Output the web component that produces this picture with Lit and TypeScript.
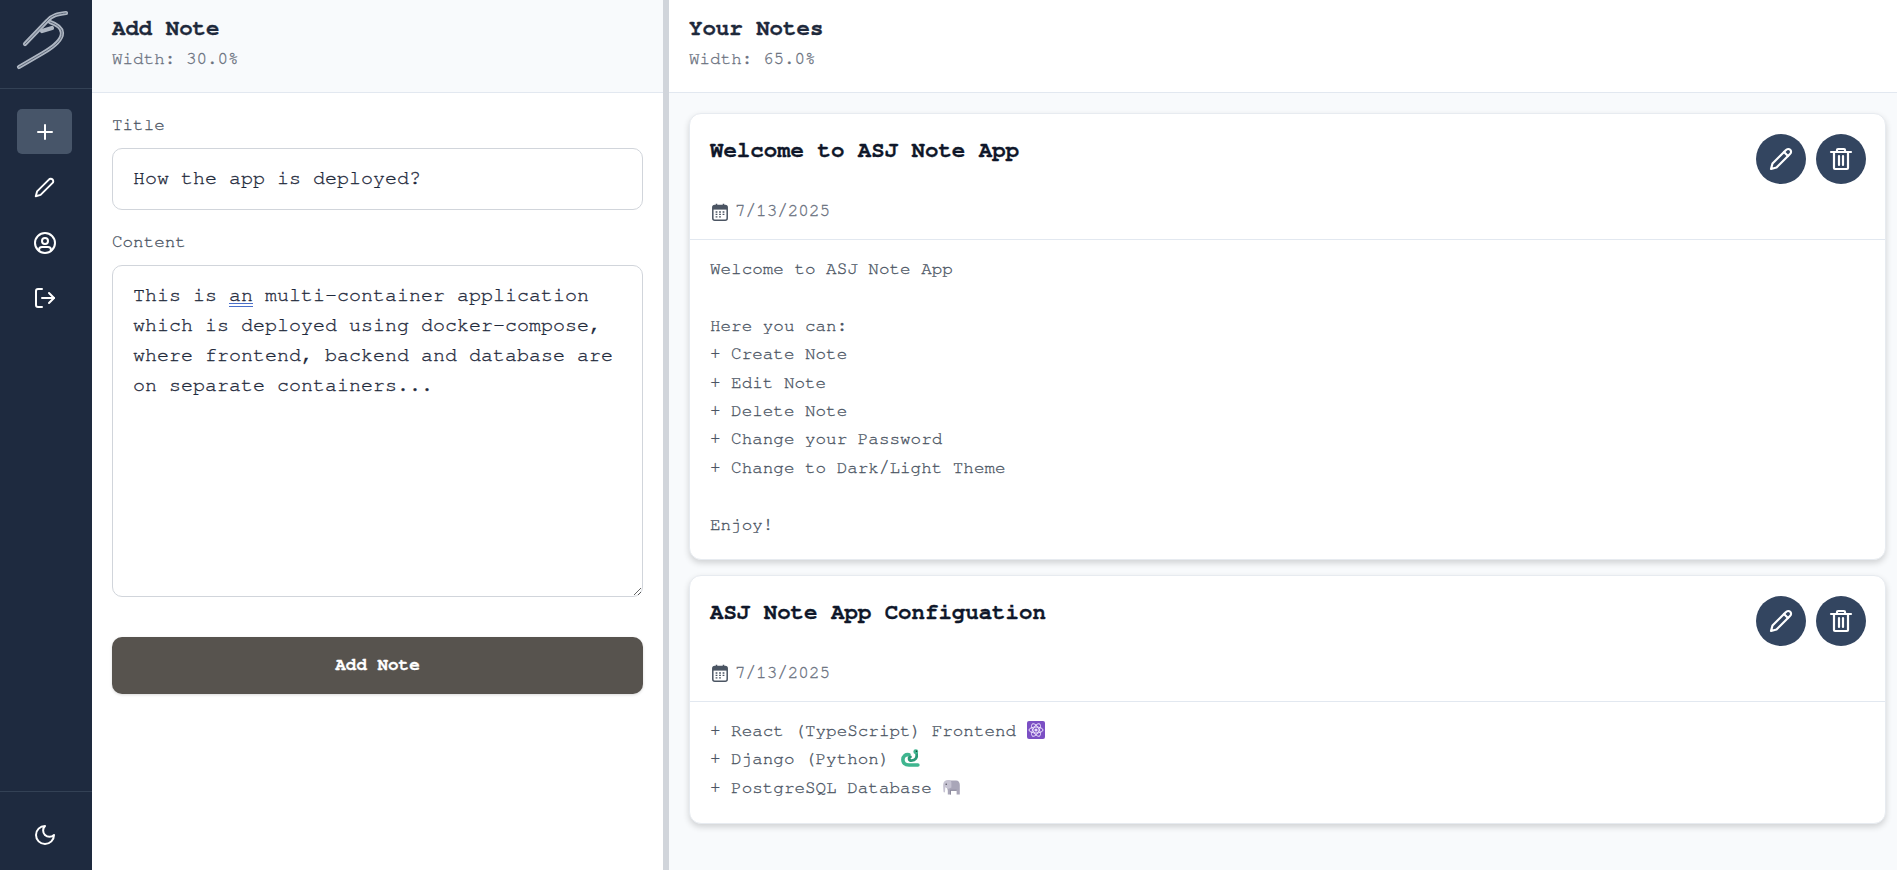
import { LitElement, html, css, svg } from "lit";
import { customElement } from "lit/decorators.js";

const plus = svg`<path d="M12 5v14M5 12h14"/>`;
const pencil = svg`<path d="M17 3a2.85 2.83 0 1 1 4 4L7.5 20.5 2 22l1.5-5.5Z"/>`;
const pencilTick = svg`<path d="M17 3a2.85 2.83 0 1 1 4 4L7.5 20.5 2 22l1.5-5.5Z"/><path d="m15 5 4 4"/>`;
const user = svg`<circle cx="12" cy="12" r="10"/><circle cx="12" cy="10" r="3"/><path d="M6 19.5v-.5a3 3 0 0 1 3-3h6a3 3 0 0 1 3 3v.5"/>`;
const logout = svg`<path d="M9 21H5a2 2 0 0 1-2-2V5a2 2 0 0 1 2-2h4"/><path d="M16 17l5-5-5-5"/><path d="M21 12H9"/>`;
const moon = svg`<path d="M12 3a6 6 0 0 0 9 9 9 9 0 1 1-9-9Z"/>`;
const trash = svg`<path d="M2 5h20"/><path d="M8 5V3a1 1 0 0 1 1-1h6a1 1 0 0 1 1 1v2"/><path d="M5 5v16a1 1 0 0 0 1 1h12a1 1 0 0 0 1-1V5"/><path d="M10 9v9M14 9v9"/>`;

const icon = (body: unknown, cls = "") =>
  html`<svg class="icon ${cls}" viewBox="0 0 24 24">${body}</svg>`;

const calendar = html`<svg class="cal" viewBox="0 0 16 18">
  <rect x="0.8" y="2.6" width="14.4" height="14.6" rx="2" fill="none" stroke="#4b5563" stroke-width="1.5"/>
  <rect x="1" y="3" width="14" height="3.6" fill="#4b5563"/>
  <path d="M4.5 0.8v3M11.5 0.8v3" stroke="#4b5563" stroke-width="1.5"/>
  <path d="M3.6 9h1.8M7.1 9h1.8M10.6 9h1.8M3.6 11.4h1.8M7.1 11.4h1.8M10.6 11.4h1.8M3.6 13.8h1.8M7.1 13.8h1.8" stroke="#4b5563" stroke-width="1.3"/>
</svg>`;

const atom = html`<svg class="emoji" viewBox="0 0 18 18">
  <rect width="18" height="18" rx="2" fill="#7b4fc4"/>
  <g fill="none" stroke="#e9defa" stroke-width="1">
    <ellipse cx="9" cy="9" rx="7" ry="3"/>
    <ellipse cx="9" cy="9" rx="7" ry="3" transform="rotate(60 9 9)"/>
    <ellipse cx="9" cy="9" rx="7" ry="3" transform="rotate(120 9 9)"/>
  </g>
  <circle cx="9" cy="9" r="1.6" fill="#e9defa"/>
</svg>`;

const snake = html`<svg class="emoji snake" viewBox="0 0 18 18">
  <path d="M16 15.2H7.5C3.5 15.2 1.8 12.8 1.8 10.2 1.8 6.8 4.5 4.8 7.5 5.4" fill="none" stroke="#3fb58f" stroke-width="3.4" stroke-linecap="round"/>
  <path d="M14.8 4.5C15.4 8 14 11 9.8 11 7.2 11 7 8 9 7.4" fill="none" stroke="#2c9a78" stroke-width="2.6" stroke-linecap="round"/>
  <circle cx="14" cy="2.6" r="2.3" fill="#3fb58f"/>
  <circle cx="14.6" cy="2.2" r="0.7" fill="#17352c"/>
</svg>`;

const elephant = html`<svg class="emoji" viewBox="0 0 18 18">
  <path d="M7 2.4h7c2.5 0 3.8 2 3.8 4.6V16.4h-3.2v-3.6H9v3.6H5.8v-3.6L5.2 10 7 2.4Z" fill="#a9a6b8"/>
  <path d="M7 2C4 1.6 1.4 3.2 1.2 6.2c-.1 2 .1 5 .3 7.5.1.9 1.4.9 1.5 0l.3-4.5L6 11 9.4 9.5V4.5C9.4 3 8 2.2 7 2Z" fill="#c6c3d2"/>
  <circle cx="4.2" cy="6.2" r="0.7" fill="#45434f"/>
  <path d="M14.6 12.8H9v3.6h-.9v-4.6h6.5Z" fill="#8b889b"/>
</svg>`;

@customElement("app-root")
export class AppRoot extends LitElement {
  static styles = css`
    :host {
      display: flex;
      height: 870px;
      overflow: hidden;
      font-family: "Nimbus Mono PS", "FreeMono", "Liberation Mono", "Courier New", monospace;
      color: #1e293b;
      background: #fff;
      -webkit-text-stroke: 0.3px currentColor;
    }
    * { box-sizing: border-box; }
    .icon {
      width: 24px;
      height: 24px;
      fill: none;
      stroke: currentColor;
      stroke-width: 2;
      stroke-linecap: round;
      stroke-linejoin: round;
    }
    .icon.small { width: 21px; height: 21px; stroke-width: 2.2; }
    .sidebar {
      width: 92px;
      flex: none;
      background: #1e2a3f;
      color: #fff;
      display: flex;
      flex-direction: column;
    }
    .logo {
      height: 89px;
      flex: none;
      border-bottom: 1px solid #334155;
    }
    .logo svg { display: block; width: 92px; height: 88px; }
    .nav {
      flex: 1;
      padding: 20px 20px 0 17px;
      display: flex;
      flex-direction: column;
      gap: 10.5px;
    }
    .nav-btn {
      height: 45px;
      border-radius: 5px;
      display: flex;
      align-items: center;
      justify-content: center;
    }
    .nav-btn.active { background: #475569; }
    .foot {
      height: 79px;
      flex: none;
      border-top: 1px solid #334155;
      padding: 7px 3px 0 0;
      display: flex;
      align-items: center;
      justify-content: center;
    }
    .panel { display: flex; flex-direction: column; min-width: 0; }
    .left { width: 571px; flex: none; background: #fff; }
    .divider { width: 6px; flex: none; background: #d1d5db; }
    .right { flex: 1; background: #f8fafc; }
    .head {
      height: 93px;
      flex: none;
      padding: 15px 20px 0;
      border-bottom: 1px solid #e2e8f0;
    }
    .left .head { background: #f8fafc; }
    .right .head { background: #fff; }
    .head h2 {
      margin: 0;
      font-size: 22.4px;
      line-height: 26px;
      font-weight: 700;
      color: #1e293b;
    }
    .head p {
      margin: 4.5px 0 0;
      font-size: 17.6px;
      line-height: 26px;
      color: #6b7280;
    }
    .form { padding: 22px 20px 0; display: flex; flex-direction: column; }
    label {
      display: block;
      font-size: 17.6px;
      line-height: 20px;
      color: #4b5563;
      margin-bottom: 13px;
    }
    input, textarea {
      display: block;
      width: 100%;
      font-family: inherit;
      font-size: 20px;
      line-height: 30px;
      color: #1e293b;
      background: #fff;
      border: 1px solid #d1d5db;
      border-radius: 10px;
      padding: 14px 20px 16px;
      outline: none;
      margin: 0;
    }
    input { height: 62px; margin-bottom: 22px; }
    .ta { position: relative; margin-bottom: 40px; }
    textarea { height: 332px; resize: vertical; }
    .squiggle {
      position: absolute;
      left: 117px;
      top: 38px;
      width: 24px;
      height: 4px;
      border-top: 1px solid #4a6fc9;
      border-bottom: 1px solid #4a6fc9;
    }
    .submit {
      height: 57px;
      border: 0;
      border-radius: 10px;
      background: #57534e;
      color: #fff;
      font-family: inherit;
      font-weight: 700;
      font-size: 17.6px;
      padding-bottom: 2px;
      box-shadow: 0 1px 3px rgba(0,0,0,.15);
    }
    .list { padding: 20px 11px 0 20px; display: flex; flex-direction: column; gap: 15px; }
    .card {
      background: #fff;
      border: 1px solid #e7ebf0;
      border-radius: 12px;
      box-shadow: 0 3px 6px rgba(0,0,0,.16);
    }
    .card-head {
      height: 126px;
      padding: 20px 19px 0 20px;
      display: flex;
      justify-content: space-between;
      border-bottom: 1px solid #e2e8f0;
    }
    .card-head h3 {
      margin: 0 0 31px;
      font-size: 22.4px;
      line-height: 32px;
      font-weight: 700;
      color: #0f172a;
    }
    .date {
      display: flex;
      align-items: center;
      gap: 7px;
      font-size: 17.6px;
      line-height: 28px;
      color: #6b7280;
      padding-left: 2px;
    }
    .cal { width: 16px; height: 18px; flex: none; margin-top: 1px; }
    .actions { display: flex; gap: 10px; align-items: flex-start; }
    .round {
      width: 50px;
      height: 50px;
      border-radius: 50%;
      background: #334560;
      color: #fff;
      display: flex;
      align-items: center;
      justify-content: center;
    }
    .round .icon { stroke-width: 2.2; }
    .card-body {
      padding: 15px 20px 20px;
      font-size: 17.6px;
      line-height: 28.4px;
      color: #4b5563;
    }
    .card:last-child .card-body { padding-bottom: 21px; }
    .line { display: flex; align-items: center; gap: 10.5px; height: 28.4px; white-space: pre; }
    .emoji { width: 18px; height: 18px; flex: none; margin-top: -2px; }
    .emoji.snake { width: 19px; height: 19px; margin-left: 1px; }
  `;

  private note(title: string, lines: unknown[]) {
    return html`<article class="card">
      <header class="card-head">
        <div>
          <h3>${title}</h3>
          <div class="date">${calendar}<span>7/13/2025</span></div>
        </div>
        <div class="actions">
          <div class="round">${icon(pencilTick)}</div>
          <div class="round">${icon(trash)}</div>
        </div>
      </header>
      <div class="card-body">${lines.map((l) => html`<div class="line">${l}</div>`)}</div>
    </article>`;
  }

  render() {
    const content =
      "This is an multi-container application which is deployed using docker-compose, where frontend, backend and database are on separate containers...";
    return html`
      <aside class="sidebar">
        <div class="logo">
          <svg viewBox="0 0 92 88" fill="none" stroke-linecap="round" stroke-linejoin="round">
            <g stroke="#aeb6c2" stroke-width="4.2">
              <path d="M25 44 L47 21 C52 15 58 14 66 13"/>
              <path d="M19 67 L43 53 C55 46 62 40 62 33 C62 28 56 24 50 22"/>
              <path d="M42 31 L52 28"/>
            </g>
            <g stroke="#5f6a7b" stroke-width="1">
              <path d="M25 44 L47 21 C52 15 58 14 66 13"/>
              <path d="M19 67 L43 53 C55 46 62 40 62 33 C62 28 56 24 50 22"/>
            </g>
          </svg>
        </div>
        <nav class="nav">
          <div class="nav-btn active">${icon(plus)}</div>
          <div class="nav-btn">${icon(pencil, "small")}</div>
          <div class="nav-btn">${icon(user)}</div>
          <div class="nav-btn">${icon(logout)}</div>
        </nav>
        <div class="foot">${icon(moon)}</div>
      </aside>
      <section class="panel left">
        <div class="head"><h2>Add Note</h2><p>Width: 30.0%</p></div>
        <form class="form">
          <label>Title</label>
          <input .value=${"How the app is deployed?"} />
          <label>Content</label>
          <div class="ta">
            <textarea .value=${content}></textarea>
            <span class="squiggle"></span>
          </div>
          <button class="submit" type="button">Add Note</button>
        </form>
      </section>
      <div class="divider"></div>
      <section class="panel right">
        <div class="head"><h2>Your Notes</h2><p>Width: 65.0%</p></div>
        <div class="list">
          ${this.note("Welcome to ASJ Note App", [
            "Welcome to ASJ Note App",
            " ",
            "Here you can:",
            "+ Create Note",
            "+ Edit Note",
            "+ Delete Note",
            "+ Change your Password",
            "+ Change to Dark/Light Theme",
            " ",
            "Enjoy!",
          ])}
          ${this.note("ASJ Note App Configuation", [
            html`<span>+ React (TypeScript) Frontend</span>${atom}`,
            html`<span>+ Django (Python)</span>${snake}`,
            html`<span>+ PostgreSQL Database</span>${elephant}`,
          ])}
        </div>
      </section>
    `;
  }
}
